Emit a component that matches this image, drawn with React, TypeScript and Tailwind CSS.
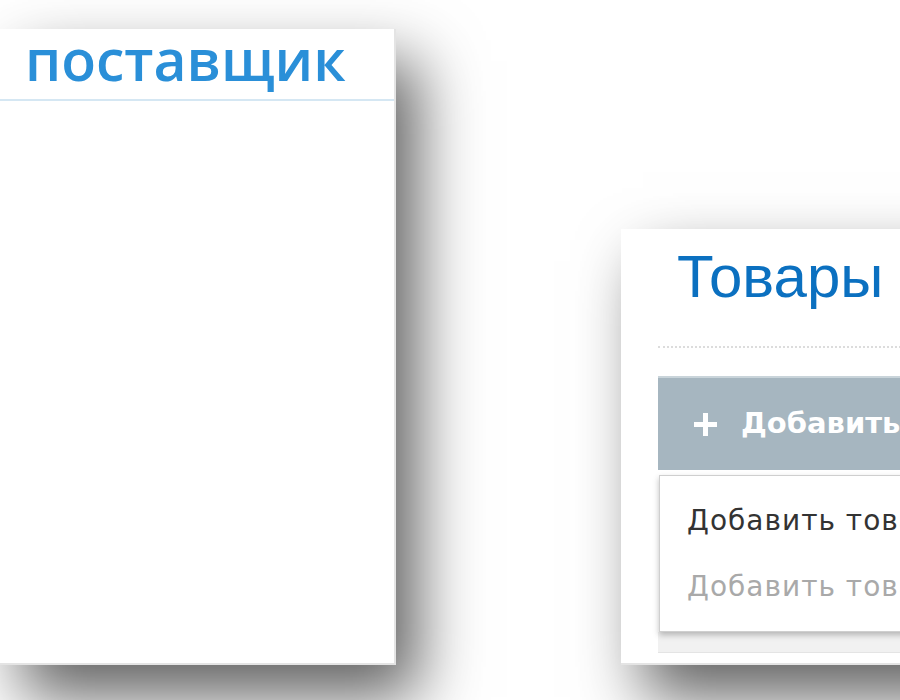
import React from "react";

export default function App() {
  return (
    <div className="w-[900px] h-[700px] overflow-hidden bg-white relative" style={{ fontFamily: '"DejaVu Sans", "Open Sans", sans-serif' }}>
      <div className="flex items-start w-[1200px]">
        {/* Left card */}
        <div className="w-[396px] shrink-0 mt-[29px] h-[636px] bg-white border-r-2 border-b-2 border-[#e4e4e4] shadow-[22px_32px_60px_rgba(0,0,0,0.62)]">
          <div className="h-[72px] border-b-2 border-[#d5e7f3] pl-[25px] flex items-end">
            <span className="text-[57px] leading-none font-semibold text-[#2a8fd8] pb-[11px]" style={{ fontFamily: '"Open Sans", sans-serif' }}>
              поставщик
            </span>
          </div>
        </div>

        {/* Right card */}
        <div className="ml-[225px] w-[420px] shrink-0 mt-[229px] h-[436px] bg-white border-b-2 border-[#e4e4e4] shadow-[22px_32px_60px_rgba(0,0,0,0.62)] flex flex-col">
          <div className="pl-[37px] pt-[18px]">
            <div className="pl-[19px] h-[99px] flex items-start">
              <span className="text-[60px] leading-none text-[#0b70c0]" style={{ fontFamily: '"Liberation Sans", Arial, sans-serif' }}>
                Товары
              </span>
            </div>
            <div className="border-b-2 border-dotted border-[#dcdcdc]" />
            <div className="h-[28px]" />
            <div className="h-[94px] bg-[#a6b6c0] border-t-2 border-[#c9d4da] flex items-center pl-[35px] gap-[23px]">
              <svg width="25" height="25" viewBox="0 0 25 25" className="shrink-0">
                <path d="M12.5 1v23M1 12.5h23" stroke="white" strokeWidth="5" />
              </svg>
              <span className="text-[29px] font-bold text-white whitespace-nowrap">
                Добавить товар
              </span>
            </div>
            <div className="mt-[5px] ml-[1px] w-[400px] h-[157px] bg-white border border-[#cfcfcf] shadow-[0_3px_6px_rgba(0,0,0,0.25)] flex flex-col justify-center gap-[38px] pl-[27px] relative z-10">
              <span className="text-[28px] leading-none tracking-[1px] text-[#333333] whitespace-nowrap">Добавить товар</span>
              <span className="text-[28px] leading-none tracking-[1px] text-[#a9a9a9] whitespace-nowrap">Добавить товары</span>
            </div>
            <div className="h-[21px] bg-[#f1f1f1] border-b border-[#e4e4e4]" />
          </div>
        </div>
      </div>
    </div>
  );
}
